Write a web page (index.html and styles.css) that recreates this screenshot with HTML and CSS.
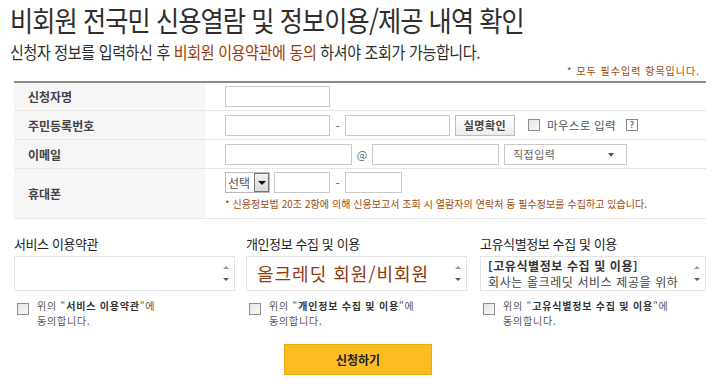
FILE: index.html
```html
<!DOCTYPE html>
<html lang="ko">
<head>
<meta charset="utf-8">
<link rel="stylesheet" href="styles.css">
</head>
<body>
<div class="page">
  <h1 class="title"><span class="cond">비회원 전국민 신용열람 및 정보이용/제공 내역 확인</span></h1>
  <p class="sub"><span class="cond">신청자 정보를 입력하신 후 <span class="hl">비회원 이용약관에 동의</span> 하셔야 조회가 가능합니다.</span></p>
  <p class="req">* 모두 필수입력 항목입니다.</p>

  <div class="form">
    <div class="row r1">
      <div class="lab">신청자명</div>
      <div class="val"><span class="inp w104"></span></div>
    </div>
    <div class="row r2">
      <div class="lab">주민등록번호</div>
      <div class="val">
        <span class="inp w104"></span><span class="dash">-</span><span class="inp w104"></span>
        <span class="btn">실명확인</span>
        <span class="cb"></span><span class="mouse">마우스로 입력</span>
        <span class="help">?</span>
      </div>
    </div>
    <div class="row r3">
      <div class="lab">이메일</div>
      <div class="val">
        <span class="inp w126"></span><span class="at">@</span><span class="inp w126"></span>
        <span class="sel">직접입력<span class="tri"></span></span>
      </div>
    </div>
    <div class="row r4">
      <div class="lab">휴대폰</div>
      <div class="val col">
        <div class="line">
          <span class="sel2">선택<span class="arrbtn"><span class="tri dk"></span></span></span>
          <span class="inp w55"></span><span class="dash">-</span><span class="inp w56"></span>
        </div>
        <p class="note">* 신용정보법 20조 2항에 의해 신용보고서 조회 시 열람자의 연락처 등 필수정보를 수집하고 있습니다.</p>
      </div>
    </div>
  </div>

  <div class="terms">
    <div class="term t1">
      <h2>서비스 이용약관</h2>
      <div class="box"><div class="boxtext"></div><div class="sb"><span class="up"></span><span class="down"></span></div></div>
      <div class="agree"><span class="cb"></span><p>위의 "<b>서비스 이용약관</b>"에<br>동의합니다.</p></div>
    </div>
    <div class="term t2">
      <h2>개인정보 수집 및 이용</h2>
      <div class="box"><div class="boxtext big">올크레딧 회원/비회원</div><div class="sb"><span class="up"></span><span class="down"></span></div></div>
      <div class="agree"><span class="cb"></span><p>위의 "<b>개인정보 수집 및 이용</b>"에<br>동의합니다.</p></div>
    </div>
    <div class="term t3">
      <h2>고유식별정보 수집 및 이용</h2>
      <div class="box"><div class="boxtext small"><b>[고유식별정보 수집 및 이용]</b><br>회사는 올크레딧 서비스 제공을 위하</div><div class="sb"><span class="up"></span><span class="down"></span></div></div>
      <div class="agree"><span class="cb"></span><p>위의 "<b>고유식별정보 수집 및 이용</b>"에<br>동의합니다.</p></div>
    </div>
  </div>

  <div class="submit-wrap"><span class="submit">신청하기</span></div>
</div>
</body>
</html>
```

FILE: styles.css
```css
* { box-sizing: border-box; }
html, body { margin: 0; padding: 0; background: #fff; }
body { font-family: "Noto Sans CJK KR", "Noto Sans", sans-serif; color: #333; }
.page { width: 720px; height: 386px; overflow: hidden; position: relative; }

.cond { display: inline-block; transform-origin: left center; white-space: nowrap; }
.title {
  margin: 0; padding: 3px 0 0 10px;
  font-size: 28px; font-weight: 400; letter-spacing: -1px;
  line-height: 34px; color: #2e2e2e; height: 38px;
}
.title .cond { transform: scaleX(0.9); }
.sub {
  margin: 0; padding: 3px 0 0 10px;
  font-size: 17px; letter-spacing: -0.4px; line-height: 22px; height: 26px; color: #2e2e2e;
}
.sub .cond { transform: scaleX(0.885); }
.sub .hl { color: #9a3c08; }
.req {
  margin: 0; padding-right: 20px; text-align: right;
  font-size: 10px; line-height: 14px; height: 17px; color: #a04a0a; letter-spacing: 1px;
}

.form { margin: 0 14px; border-top: 2px solid #8a8a8a; }
.row { display: flex; border-bottom: 1px solid #e6e6e6; }
.lab {
  width: 192px; background: #f6f6f6; padding-left: 14px;
  display: flex; align-items: center; font-size: 12px; font-weight: 700; color: #444;
}
.val { flex: 1; display: flex; align-items: center; padding-left: 19px; font-size: 12px; }
.r1 { height: 28px; }
.r2 { height: 29px; }
.r3 { height: 29px; }
.r4 { height: 50px; }
.val.col { flex-direction: column; align-items: flex-start; justify-content: flex-start; padding-top: 3px; }
.line { display: flex; align-items: center; height: 21px; }

.inp { display: inline-block; height: 21px; border: 1px solid #c9c9c9; background: #fff; }
.w104 { width: 105px; }
.w126 { width: 127px; }
.w55 { width: 56px; }
.w56 { width: 57px; }
.dash { width: 15px; text-align: center; color: #666; font-size: 12px; }
.at { width: 20px; text-align: center; color: #666; font-size: 11px; }

.btn {
  margin-left: 5px; height: 21px; width: 60px; border: 1px solid #bdbdbd;
  background: linear-gradient(#fff, #ececec);
  display: inline-flex; align-items: center; justify-content: center;
  font-size: 11px; font-weight: 700; color: #444; letter-spacing: 0.5px;
}
.cb {
  display: inline-block; width: 12px; height: 12px; border: 1px solid #8d8d8d;
  background: linear-gradient(135deg, #e4e4e4, #fafafa); flex: none;
}
.r2 .cb { margin-left: 13px; }
.mouse { margin-left: 7px; font-size: 11.5px; color: #555; letter-spacing: 0.3px; }
.help {
  margin-left: 10px; width: 12px; height: 12px; border: 1px solid #888;
  font-size: 9px; line-height: 10px; text-align: center; color: #444; font-family: "DejaVu Sans", sans-serif;
}

.sel {
  margin-left: 5px; width: 123px; height: 21px; border: 1px solid #c9c9c9;
  display: inline-flex; align-items: center; padding-left: 8px; position: relative;
  font-size: 11px; color: #666; letter-spacing: 0.5px;
}
.sel .tri { position: absolute; right: 12px; top: 8px; }
.tri {
  width: 0; height: 0; border-left: 3.5px solid transparent; border-right: 3.5px solid transparent;
  border-top: 4px solid #555; display: block;
}
.sel2 {
  width: 45px; height: 21px; border: 1px solid #b8b8b8; display: inline-flex; align-items: center;
  justify-content: space-between; padding-left: 2px; font-size: 12px; color: #555; margin-right: 4px;
}
.arrbtn {
  width: 15px; height: 19px; border-left: 1px solid #888; background: linear-gradient(#f4f4f4, #d8d8d8);
  display: flex; align-items: center; justify-content: center; outline: 1px solid #777; outline-offset: -1px;
}
.tri.dk { border-top-color: #111; border-left-width: 4px; border-right-width: 4px; }
.note { margin: 4px 0 0 0; font-size: 10px; color: #a04a0a; line-height: 14px; letter-spacing: 0.05px; }

.terms { display: flex; padding: 16px 0 0 14px; }
.term { flex: none; }
.t1 { width: 232px; }
.t2 { width: 234px; }
.t3 { width: 226px; }
.term h2 { margin: 0; font-size: 13px; font-weight: 400; color: #222; line-height: 18px; height: 21px; letter-spacing: -0.4px; }
.box {
  height: 35px; border: 1px solid #e3e3e3; display: flex; background: #fff;
}
.t1 .box { width: 221px; }
.t2 .box { width: 221px; }
.t3 .box { width: 226px; }
.boxtext { flex: 1; overflow: hidden; padding-left: 7px; }
.boxtext.big { font-size: 18px; color: #8e3a0d; line-height: 22px; padding-top: 5px; padding-left: 10px; letter-spacing: 1px; }
.boxtext.small { font-size: 12px; color: #444; line-height: 16px; padding-top: 1px; letter-spacing: 0.6px; }
.boxtext.small b { color: #333; }
.sb { width: 16px; display: flex; flex-direction: column; align-items: center; justify-content: center; gap: 9px; }
.up, .down { width: 0; height: 0; border-left: 3px solid transparent; border-right: 3px solid transparent; display: block; }
.up { border-bottom: 3px solid #999; }
.down { border-top: 3px solid #555; }

.agree { display: flex; align-items: flex-start; padding: 8px 0 0 3px; }
.agree .cb { margin-top: 4px; }
.agree p { margin: 0 0 0 8px; font-size: 10px; line-height: 14.6px; color: #555; letter-spacing: 0.8px; }
.agree b { color: #333; }

.submit-wrap { display: flex; justify-content: center; padding-top: 16px; padding-right: 4px; }
.submit {
  width: 148px; height: 31px; background: #fcbc24; border: 1px solid #f3a80d;
  display: flex; align-items: center; justify-content: center;
  font-size: 12px; font-weight: 700; color: #222;
}
```
